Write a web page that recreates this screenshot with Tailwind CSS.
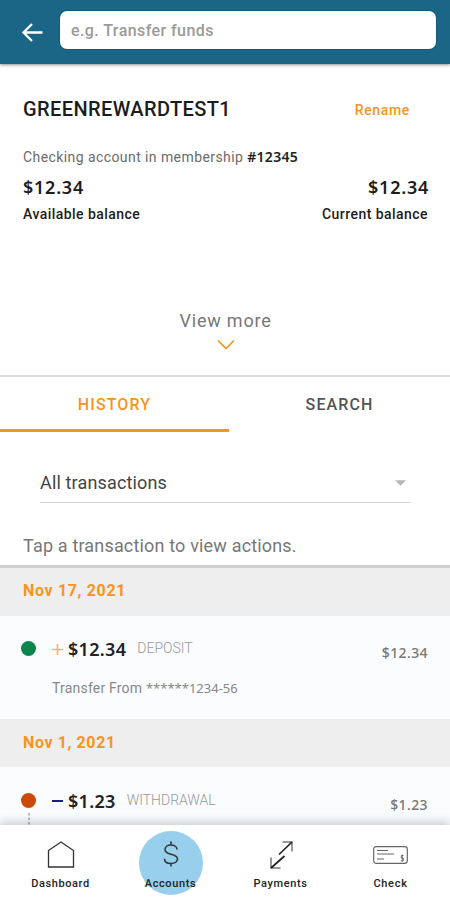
<!DOCTYPE html>
<html lang="en">
<head>
<meta charset="utf-8">
<title>Account history</title>
<script src="https://cdn.jsdelivr.net/npm/@tailwindcss/browser@4"></script>
</head>
<body class="bg-white font-['Roboto',sans-serif]">
<div class="relative flex h-[900px] w-[450px] flex-col overflow-hidden bg-white">

  <header class="relative z-10 flex h-16 shrink-0 items-start bg-[#1b6687] pt-[11px] pr-[14px] pl-[21px] shadow-[0_1px_3px_rgba(0,0,0,0.45)]">
    <svg class="mt-[11px] h-[21px] w-[22px] shrink-0" viewBox="0 0 22 21" fill="none" stroke="#fff" stroke-width="2.3"><path d="M21.5 10.5H2.500M11 2l-8.500 8.500 8.500 8.500"/></svg>
    <div class="ml-[17px] flex h-[38px] flex-1 items-center rounded-[7px] bg-white pl-[11px] shadow-[0_0_0_1px_rgba(10,80,115,0.6)]">
      <span class="mt-px text-[16px] leading-5 font-medium tracking-[0.42px] whitespace-nowrap text-[#9a9a9a]">e.g. Transfer funds</span>
    </div>
  </header>

  <section class="flex h-[313px] shrink-0 flex-col border-b-2 border-[#e0e0e0] pr-[22px] pl-[23px] pt-[33px]">
    <div class="flex h-6 items-center justify-between pr-[18px]">
      <h1 class="text-[20px] font-medium tracking-[0.4px] text-[#1c1c1c]">GREENREWARDTEST1</h1>
      <span class="mt-0.5 text-[14px] font-medium tracking-[0.65px] text-[#f7941e]">Rename</span>
    </div>
    <p class="mt-[26px] text-[14px] leading-5 tracking-[0.42px] whitespace-nowrap text-[#6b6b6b]">Checking account in membership <span class="font-['Noto_Sans',sans-serif] text-[14px] font-semibold tracking-[0.3px] text-[#222]">#12345</span></p>
    <div class="mt-2 flex justify-between font-['Noto_Sans',sans-serif] text-[18px] leading-6 font-semibold tracking-[0.75px] text-[#1c1c1c]"><span>$12.34</span><span class="-mr-px">$12.34</span></div>
    <div class="mt-[5px] flex justify-between text-[14px] leading-5 font-medium tracking-[0.45px] text-[#1c1c1c]"><span>Available balance</span><span>Current balance</span></div>
    <div class="mt-[85px] flex flex-col items-center">
      <span class="text-[18px] leading-6 tracking-[0.8px] text-[#777]">View more</span>
      <svg class="mt-[7px] h-[11px] w-[18px]" viewBox="0 0 18 11" fill="none" stroke="#f7941e" stroke-width="1.6"><path d="M1 .5l8 8 8-8"/></svg>
    </div>
  </section>

  <div class="flex h-[55px] shrink-0 text-[16px] leading-[55px] font-medium tracking-[1.1px]">
    <div class="w-[229px] border-b-[3px] border-[#f7941e] text-center text-[#f7941e]">HISTORY</div>
    <div class="flex-1 text-center text-[#555]">SEARCH</div>
  </div>

  <section class="flex h-[136px] shrink-0 flex-col border-b-[3px] border-[#cfcfcf]">
    <div class="mt-8 mr-[39px] ml-10 flex h-[39px] items-center justify-between border-b border-[#d3d4da] pr-[5px]">
      <span class="text-[18px] leading-6 tracking-[0.15px] text-[#444]">All transactions</span>
      <svg class="h-[6px] w-[11px]" viewBox="0 0 12 6" fill="#b5b5b5"><path d="M0 0h12L6 6z"/></svg>
    </div>
    <p class="mt-[31px] ml-[23px] text-[18px] leading-6 tracking-[0.17px] text-[#777]">Tap a transaction to view actions.</p>
  </section>

  <section class="shrink-0">
    <h2 class="h-12 bg-[#eee] pl-[23px] text-[16px] leading-[45px] font-bold tracking-[0.65px] text-[#f7941e]">Nov 17, 2021</h2>
    <div class="h-[103px] bg-[#fafcfe] pt-5 pr-[22px] pl-[21px]">
      <div class="flex h-6 items-center">
        <span class="h-[15px] w-[15px] rounded-full bg-[#0b854c]"></span>
        <svg class="mt-0.5 ml-4 h-[11px] w-[11px]" viewBox="0 0 11 11" stroke="#f9b368" stroke-width="1.6"><path d="M5.500 0v11M0 5.500h11"/></svg>
        <span class="mt-0.5 ml-[5px] font-['Noto_Sans',sans-serif] text-[18px] leading-6 font-semibold tracking-[0.3px] text-[#222]">$12.34</span>
        <span class="ml-[11px] text-[14px] leading-6 font-light text-[#999]">DEPOSIT</span>
        <span class="mt-[9px] ml-auto font-['Noto_Sans',sans-serif] text-[14px] leading-6 font-medium tracking-[0.4px] text-[#777]">$12.34</span>
      </div>
      <p class="mt-4 ml-[31px] text-[14px] leading-6 tracking-[0.2px] text-[#888]">Transfer From <span class="font-['Noto_Sans',sans-serif] text-[13px] tracking-normal">******1234-56</span></p>
    </div>
  </section>

  <section class="shrink-0">
    <h2 class="h-12 bg-[#eee] pl-[23px] text-[16px] leading-12 font-bold tracking-[0.6px] text-[#f7941e]">Nov 1, 2021</h2>
    <div class="h-[58px] bg-[#fafcfe] pt-[21px] pr-[22px] pl-[21px]">
      <div class="flex h-6 items-center">
        <span class="h-[15px] w-[15px] rounded-full bg-[#cc4a07]"></span>
        <span class="mt-0.5 ml-4 h-0.5 w-[11px] bg-[#1c1c84]"></span>
        <span class="mt-0.5 ml-[5px] font-['Noto_Sans',sans-serif] text-[18px] leading-6 font-semibold tracking-[0.3px] text-[#222]">$1.23</span>
        <span class="ml-[11px] text-[14px] leading-6 font-light text-[#999]">WITHDRAWAL</span>
        <span class="mt-[9px] ml-auto font-['Noto_Sans',sans-serif] text-[14px] leading-6 font-medium tracking-[0.4px] text-[#777]">$1.23</span>
      </div>
      <svg class="mt-px ml-[7px] h-3 w-0.5" viewBox="0 0 2 12" fill="#bbb"><path d="M0 0h2v2.500H0zM0 4.500h2V7H0zM0 9h2v2.500H0z"/></svg>
    </div>
  </section>

  <nav class="relative z-10 flex h-[75px] shrink-0 justify-center bg-white pl-px text-[11px] leading-4 font-medium text-[#222] shadow-[0_-2px_10px_rgba(60,70,70,0.3)]">
    <div class="flex w-[110px] flex-col items-center pt-4">
      <svg class="h-7 w-7" viewBox="0 0 28 28" fill="none" stroke="#333" stroke-width="1.3"><path d="M1.500 9.500L14 1l12.500 8.500V26h-25z"/></svg>
      <span class="mt-[7px] tracking-[0.6px]">Dashboard</span>
    </div>
    <div class="relative flex w-[110px] flex-col items-center pt-4">
      <div class="absolute top-[6px] left-[23px] h-16 w-16 rounded-full bg-[#97cfec]"></div>
      <svg class="relative h-7 w-7" viewBox="0 0 28 28" fill="none" stroke="#333" stroke-width="1.6"><path d="M14 .5v4M14 22.500v3M20 8.500c0-2.500-2.500-4.500-6-4.500S8 6 8 8.500s2 3.700 6 4.700 6.500 2.300 6.500 4.800-2.500 4.500-6.500 4.500-6.500-2-6.500-4.800"/></svg>
      <span class="relative mt-[7px] tracking-[0.6px]">Accounts</span>
    </div>
    <div class="flex w-[110px] flex-col items-center pt-4">
      <svg class="h-7 w-7" viewBox="0 0 28 28" fill="none"><path d="M15.500 1h9.500v9.500M4 16.500V27h9.500" stroke="#777" stroke-width="1.500"/><path d="M12 13.500L25 1M17.500 15L4 27" stroke="#222" stroke-width="1.700"/></svg>
      <span class="mt-[7px] tracking-[0.6px]">Payments</span>
    </div>
    <div class="flex w-[110px] flex-col items-center pt-[21px]">
      <svg class="h-[18px] w-[35px]" viewBox="0 0 35 18" fill="none" stroke="#666"><rect x=".7" y=".7" width="33.600" height="16.600" rx="2.500" stroke-width="1.200"/><path d="M4 4.500h11M4 8h17M4 13h7" stroke-width="1.100"/><path d="M30.500 9.500h-2.200v2.500h2v2.700h-2.400M29.300 8.500v7.200" stroke-width=".9"/></svg>
      <span class="mt-3 tracking-[0.7px]">Check</span>
    </div>
  </nav>
</div>
</body>
</html>
